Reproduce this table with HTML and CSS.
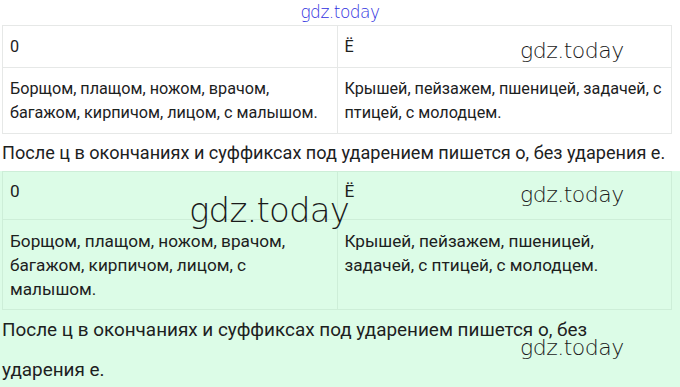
FILE: index.html
```html
<!DOCTYPE html>
<html lang="ru">
<head>
<meta charset="utf-8">
<title>gdz.today</title>
<link rel="stylesheet" href="styles.css">
</head>
<body>
<div class="page">
  <header class="site">gdz.today</header>
  <section class="block white">
    <table class="grid">
      <tr><td class="head">0</td><td class="head">Ё</td></tr>
      <tr><td><span class="ln">Борщом, плащом, ножом, врачом,</span><span class="ln">багажом, кирпичом, лицом, с малышом.</span></td><td><span class="ln">Крышей, пейзажем, пшеницей, задачей, с</span><span class="ln">птицей, с молодцем.</span></td></tr>
    </table>
    <p class="rule">После ц в окончаниях и суффиксах под ударением пишется о, без ударения е.</p>
  </section>
  <section class="block green">
    <table class="grid">
      <tr><td class="head">0</td><td class="head">Ё</td></tr>
      <tr><td><span class="ln">Борщом, плащом, ножом, врачом,</span><span class="ln">багажом, кирпичом, лицом, с</span><span class="ln">малышом.</span></td><td><span class="ln">Крышей, пейзажем, пшеницей,</span><span class="ln">задачей, с птицей, с молодцем.</span></td></tr>
    </table>
    <p class="rule">После ц в окончаниях и суффиксах под ударением пишется о, без<br>ударения е.</p>
  </section>
  <span class="wm wm1">gdz.today</span>
  <span class="wm wm2">gdz.today</span>
  <span class="wm wm3">gdz.today</span>
  <span class="wm wm4">gdz.today</span>
</div>
</body>
</html>
```
FILE: styles.css
```css
html, body {
  margin: 0;
  padding: 0;
  background: #ffffff;
}
.page {
  position: relative;
  width: 680px;
  height: 387px;
  overflow: hidden;
  font-family: Roboto, "Noto Sans", sans-serif;
  color: #1c211e;
}
.site {
  height: 25px;
  line-height: 25px;
  text-align: center;
  font-family: "DejaVu Sans", sans-serif;
  font-weight: 200;
  font-size: 17px;
  color: #3030e0;
  letter-spacing: -0.5px;
}
.block {
  padding: 0 8px 0 2px;
}
.grid {
  width: 670px;
  border-collapse: collapse;
  table-layout: fixed;
}
.grid td {
  border: 1px solid #e6e8e7;
  padding: 9px 4px 8px 7px;
  line-height: 24px;
  vertical-align: top;
  width: 50%;
}
.ln {
  display: block;
  white-space: nowrap;
}
.white .grid {
  font-size: 16.2px;
}
.white .grid td.head {
  padding-bottom: 8px;
}
.white .rule {
  margin: 0;
  font-size: 18.1px;
  line-height: 37px;
  white-space: nowrap;
}
.green {
  background: #dcfce7;
}
.green .grid {
  font-size: 17.2px;
}
.green .grid td {
  border-color: #cdeed8;
  padding: 9px 4px 8px 7px;
}
.green .grid td.head {
  padding-top: 7px;
  padding-bottom: 16px;
}
.green .rule {
  margin: 0;
  font-size: 18.9px;
  line-height: 40px;
}
.wm {
  position: absolute;
  font-family: "DejaVu Sans", sans-serif;
  font-weight: 200;
  color: #1a1a1a;
  letter-spacing: -0.5px;
  white-space: nowrap;
}
.wm1 { left: 520px; top: 38px; font-size: 22px; }
.wm2 { left: 189px; top: 190px; font-size: 34px; letter-spacing: -0.8px; }
.wm3 { left: 520px; top: 182px; font-size: 22px; }
.wm4 { left: 520px; top: 335px; font-size: 22px; }
```
